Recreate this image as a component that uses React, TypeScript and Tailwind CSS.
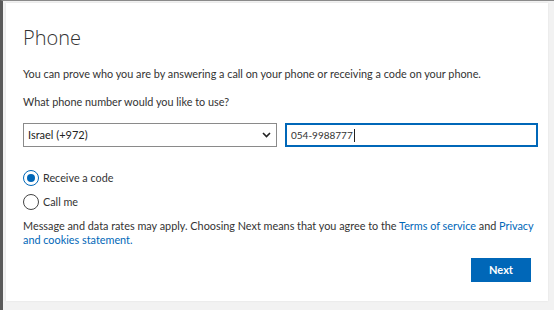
import React from 'react';

export default function App() {
  const [method, setMethod] = React.useState<'code' | 'call'>('code');

  return (
    <div
      className="w-[554px] h-[310px] bg-[#f2f2f2] border-l-[3px] border-l-[#5a5a5a] border-t border-t-[#8a8a8a] pl-[3px] pt-[2px] pr-[6px] overflow-hidden"
      style={{ fontFamily: 'Lato, "Open Sans", sans-serif' }}
    >
      <div className="bg-white h-[298px] pl-[17px] pr-[10px] pt-[19px] text-[#333] shadow-[0_0_2px_rgba(0,0,0,0.08)]">
        <h1
          className="text-[20px] font-light leading-[32px] text-[#333]"
          style={{ fontFamily: '"Open Sans", sans-serif' }}
        >
          Phone
        </h1>

        <p className="mt-[12px] text-[10.85px] leading-[16px]">
          You can prove who you are by answering a call on your phone or receiving a code on your phone.
        </p>
        <p className="mt-[12px] text-[10.85px] leading-[16px]">What phone number would you like to use?</p>

        <div className="mt-[13px] flex gap-[8px]">
          <div className="relative w-[254px] h-[24px] border border-[#8a8a8a] flex items-center pl-[4px] text-[11px] text-[#222]">
            Israel (+972)
            <svg className="absolute right-[5px] top-[8px]" width="9" height="6" viewBox="0 0 9 6">
              <path d="M1 1l3.5 3.5L8 1" fill="none" stroke="#222" strokeWidth="1.6" />
            </svg>
          </div>
          <div className="w-[253px] h-[24px] border-2 border-[#0067b8] flex items-center pl-[4px] text-[10px] text-[#333]">
            054-9988777<span className="w-px h-[13px] bg-[#222] ml-px" />
          </div>
        </div>

        <div className="mt-[23px] flex flex-col gap-[8px]">
          <label className="flex items-center gap-[4px] text-[10.8px] leading-[16px] cursor-pointer" onClick={() => setMethod('code')}>
            <span
              className={`w-[16px] h-[16px] rounded-full border flex items-center justify-center ${
                method === 'code' ? 'border-[#0067b8]' : 'border-[#444]'
              }`}
            >
              {method === 'code' && <span className="w-[8px] h-[8px] rounded-full bg-[#0067b8]" />}
            </span>
            Receive a code
          </label>
          <label className="flex items-center gap-[4px] text-[10.8px] leading-[16px] cursor-pointer" onClick={() => setMethod('call')}>
            <span
              className={`w-[16px] h-[16px] rounded-full border flex items-center justify-center ${
                method === 'call' ? 'border-[#0067b8]' : 'border-[#444]'
              }`}
            >
              {method === 'call' && <span className="w-[8px] h-[8px] rounded-full bg-[#0067b8]" />}
            </span>
            Call me
          </label>
        </div>

        <p className="mt-[9px] text-[10.85px] leading-[14px] whitespace-nowrap">
          Message and data rates may apply. Choosing Next means that you agree to the{' '}
          <a className="text-[#0067b8]">Terms of service</a> and <a className="text-[#0067b8]">Privacy</a>
          <br />
          <a className="text-[#0067b8]">and cookies statement.</a>
        </p>

        <div className="mt-[11px] flex justify-end pr-[7px]">
          <button className="w-[60px] h-[24px] bg-[#0067b8] text-white text-[11px] font-bold">Next</button>
        </div>
      </div>
    </div>
  );
}
